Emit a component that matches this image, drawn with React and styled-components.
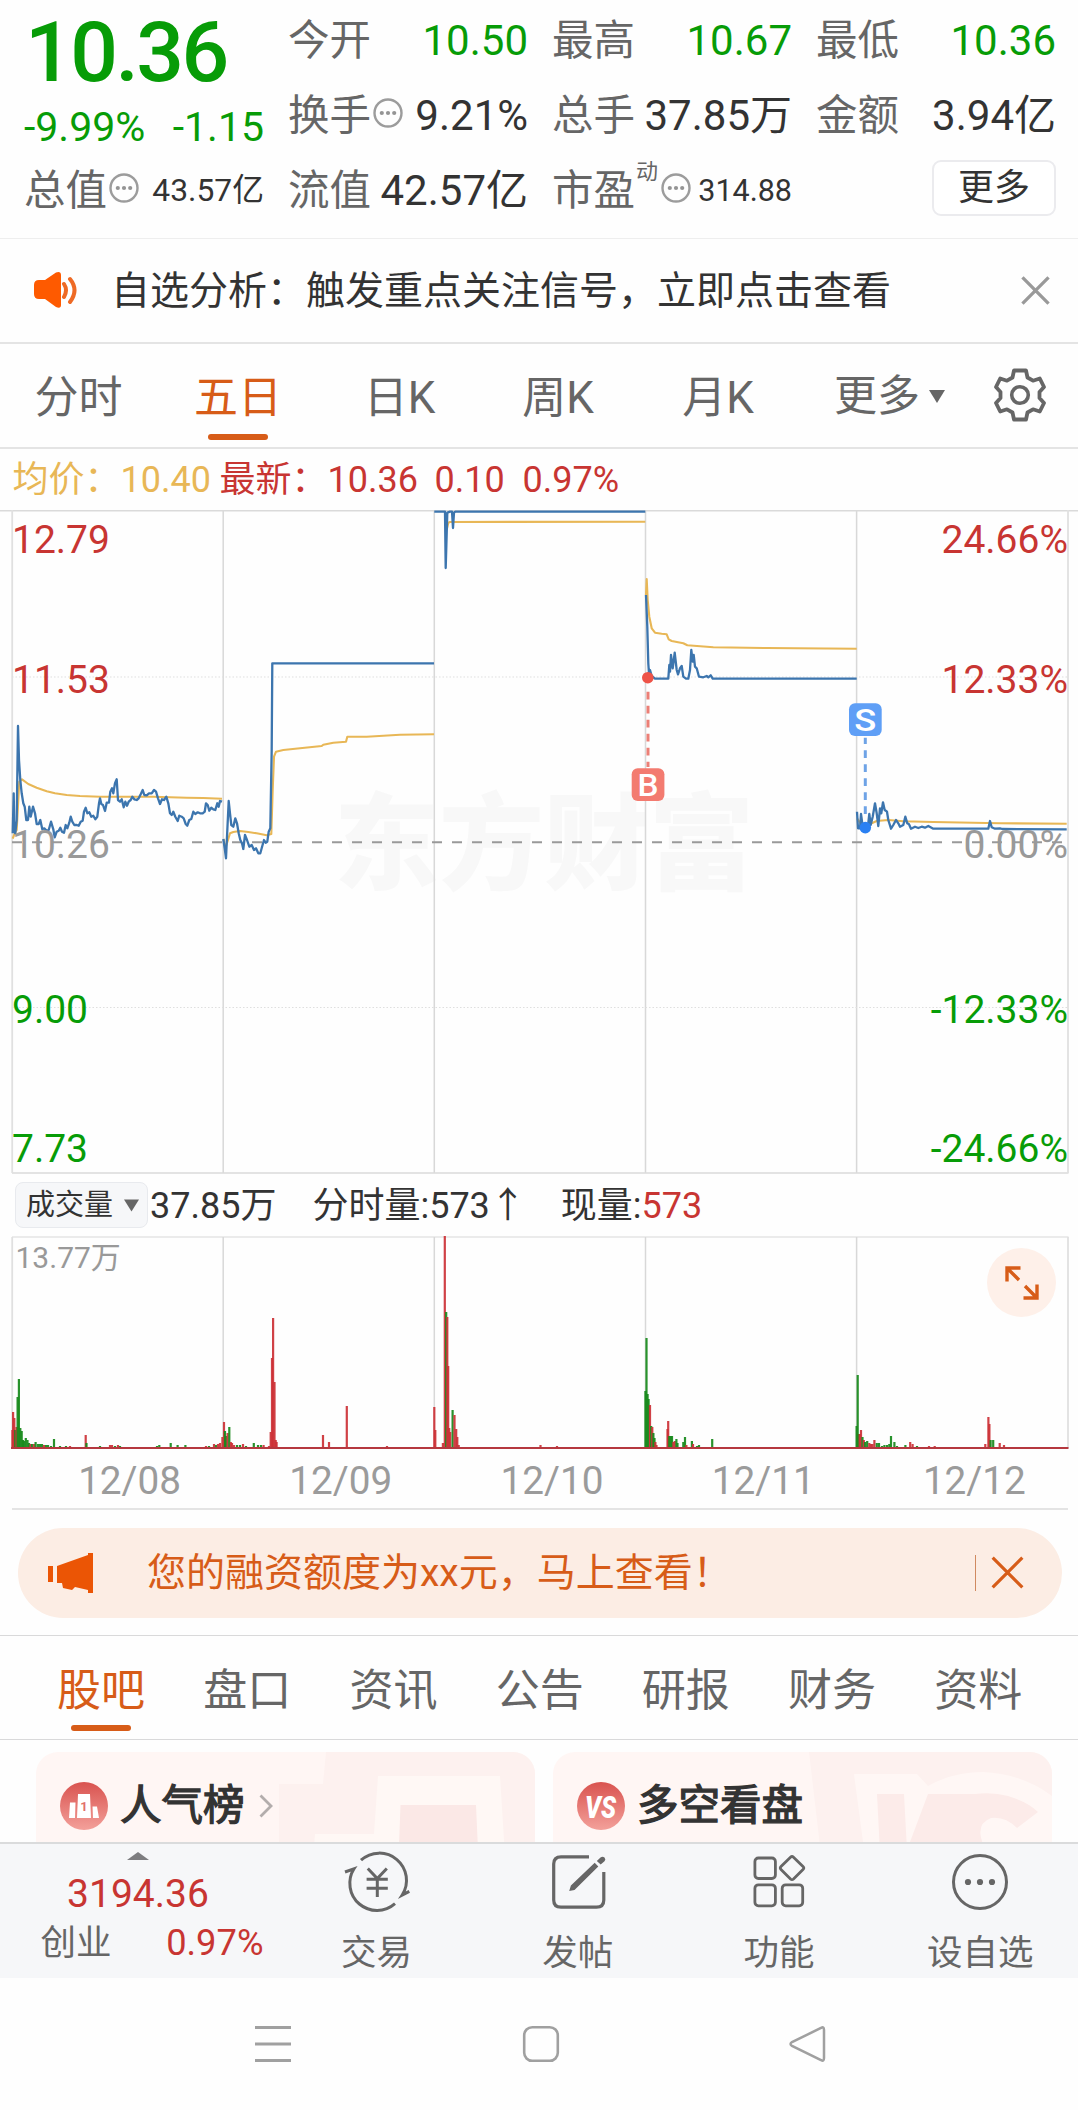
import React from "react";
import styled, { createGlobalStyle } from "styled-components";

const GREEN = "#079c07";
const RED = "#c83532";
const ORANGE = "#d75c18";
const GOLD = "#e8b756";
const BLUE = "#3c75ae";
const GREY = "#666";
const INK = "#333";
const LINE = "#e4e4e4";

const Global = createGlobalStyle`
  * { box-sizing: border-box; }
  body {
    margin: 0;
    background: #fdfdfd;
    color: ${INK};
    font-family: Roboto, "Noto Sans CJK SC", sans-serif;
  }
  svg { display: block; flex: none; }
`;

const Page = styled.main`
  width: 1078px;
  height: 2110px;
  display: flex;
  flex-direction: column;
  background: #fefefe;
  overflow: hidden;
`;

/* ---------- quote header ---------- */
const Quote = styled.section`
  height: 239px;
  padding: 3px 22px 0 25px;
  display: grid;
  grid-template-columns: repeat(4, 239px);
  column-gap: 25px;
  border-bottom: 1px solid #eeeeee;
`;
const Column = styled.div`
  display: flex;
  flex-direction: column;
`;
const Cell = styled.div`
  height: 75px;
  display: flex;
  align-items: center;
  justify-content: space-between;
  line-height: 75px;
  white-space: nowrap;
`;
const BigPrice = styled.div`
  height: 91px;
  line-height: 100px;
  font-size: 84px;
  font-weight: 500;
  letter-spacing: -2.5px;
  color: ${GREEN};
`;
const ChangeRow = styled.div`
  height: 59px;
  display: flex;
  justify-content: space-between;
  line-height: 67px;
  font-size: 41px;
  color: ${GREEN};
  margin-left: -1px;
`;
const Label = styled.span`
  font-size: 41.5px;
  color: ${GREY};
  display: flex;
  align-items: center;
  gap: 3px;
  margin-left: -1px;
`;
const Sup = styled.sup`
  font-size: 22px;
  line-height: 22px;
  align-self: flex-start;
  margin: 8px 1px 0 -2px;
`;
const InfoSlot = styled.span`
  margin: -6px 0 0 -1px;
`;
const Value = styled.span`
  font-size: ${(p) => p.$size || 42}px;
  color: ${(p) => (p.$green ? GREEN : INK)};
`;
const MoreButton = styled.button`
  width: 124px;
  height: 56px;
  margin: 7px 0 0 auto;
  padding: 0;
  border: 2px solid #ebebee;
  border-radius: 9px;
  background: #fff;
  color: ${INK};
  font: 36px/51px Roboto, "Noto Sans CJK SC", sans-serif;
`;

/* ---------- notice ---------- */
const Notice = styled.section`
  height: 105px;
  display: flex;
  align-items: center;
  padding: 0 28px 1px 33px;
  border-bottom: 2px solid ${LINE};
  font-size: 39px;
  line-height: 103px;
`;
const NoticeText = styled.span`
  flex: 1;
  margin: 2px 0 0 32px;
  white-space: nowrap;
`;

/* ---------- tabs ---------- */
const Tabs = styled.nav`
  height: 105px;
  display: flex;
  border-bottom: 2px solid ${LINE};
`;
const Tab = styled.div`
  width: ${(p) => p.$w}px;
  height: 100%;
  display: flex;
  flex: none;
  flex-direction: column;
  align-items: center;
  font-size: 44px;
  line-height: ${(p) => p.$lh}px;
  color: ${(p) => (p.$active ? ORANGE : GREY)};
  white-space: nowrap;
`;
const Underline = styled.i`
  width: 60px;
  height: 6px;
  border-radius: 3px;
  background: ${ORANGE};
  margin-top: ${(p) => p.$top}px;
`;
const MoreTab = styled.div`
  display: flex;
  align-items: center;
  gap: 9px;
  width: 161px;
  padding: 1px 0 0 34px;
  font-size: 43px;
  line-height: 107px;
  color: ${GREY};
`;
const GearSlot = styled.div`
  display: flex;
  flex: 1;
  justify-content: center;
  padding: 24px 0 0 0;
`;

/* ---------- chart ---------- */
const Legend = styled.div`
  height: 61px;
  padding: 0 0 0 12.5px;
  display: flex;
  font-size: 36px;
  line-height: 62px;
  color: ${RED};
  white-space: pre;
`;
const LegendItem = styled.span`
  color: ${(p) => p.$color || RED};
  width: ${(p) => p.$w}px;
`;
const VolumeBar = styled.div`
  height: 62px;
  display: flex;
  align-items: center;
  padding-left: 15px;
  font-size: 36px;
  line-height: 64px;
  white-space: nowrap;
`;
const Picker = styled.div`
  width: 133px;
  height: 46px;
  display: flex;
  align-items: center;
  justify-content: space-between;
  padding: 0 8px 0 10px;
  border: 1.5px solid #e8eaee;
  border-radius: 8px;
  background: #f6f7f9;
  font-size: 29px;
  line-height: 44px;
`;
const Metric = styled.span`
  margin: 2px 0 0 ${(p) => p.$gap}px;
`;
const RedText = styled.span`
  color: ${RED};
`;
const VolumePanel = styled.div`
  position: relative;
`;
const ExpandButton = styled.div`
  position: absolute;
  left: 987px;
  top: 12px;
  width: 69px;
  height: 69px;
  border-radius: 50%;
  background: #fef0e9;
  display: flex;
  align-items: center;
  justify-content: center;
`;
const Dates = styled.div`
  height: 61px;
  margin: 0 10px 0 12px;
  padding-left: 12px;
  display: flex;
  border-bottom: 2px solid ${LINE};
`;
const DateLabel = styled.span`
  flex: none;
  width: 211.2px;
  text-align: center;
  font-size: 38.7px;
  line-height: 64px;
  color: #9b9b9b;
  &:last-child {
    margin-right: -25px;
  }
`;

/* ---------- promo ---------- */
const Promo = styled.section`
  height: 90px;
  margin: 18px 16px 17px 18px;
  border-radius: 45px;
  background: #fcede4;
  color: ${ORANGE};
  display: flex;
  align-items: center;
  padding: 0 38px 1px 29px;
  font-size: 39px;
  line-height: 88px;
`;
const PromoText = styled.span`
  flex: 1;
  margin-left: 53px;
  white-space: nowrap;
`;
const PromoRule = styled.i`
  width: 1.5px;
  height: 36px;
  background: #d08a60;
  margin-right: 15px;
`;
const SubTabs = styled.nav`
  height: 105px;
  display: flex;
  padding: 0 27px 0 28px;
  border-top: 1px solid #d9d9da;
  border-bottom: 1px solid #d9d9da;
`;

/* ---------- cards ---------- */
const Cards = styled.section`
  height: 102px;
  padding: 12px 26px 0 36px;
  display: grid;
  grid-template-columns: 499px 499px;
  column-gap: 18px;
  overflow: hidden;
`;
const Card = styled.article`
  position: relative;
  height: 120px;
  border-radius: 22px;
  overflow: hidden;
  background: #fff6f4;
`;
const CardArt = styled.svg`
  position: absolute;
  inset: 0;
`;
const CardHead = styled.div`
  position: relative;
  display: flex;
  align-items: center;
  height: 107px;
  padding-left: 24px;
`;
const CardTitle = styled.span`
  margin: 1px 14px 0 12px;
  font-size: 41.5px;
  line-height: 108px;
  -webkit-text-stroke: 1.3px ${INK};
  color: ${INK};
`;

/* ---------- bottom bar ---------- */
const Bottom = styled.footer`
  height: 136px;
  display: flex;
  border-top: 2px solid #dadbdc;
  background: #f6f7f9;
  color: ${GREY};
`;
const IndexBox = styled.div`
  width: 276px;
  flex: none;
  display: flex;
  flex-direction: column;
  align-items: center;
  padding-top: 8px;
`;
const IndexValue = styled.div`
  margin-top: 10px;
  height: 48px;
  font-size: 39px;
  line-height: 49px;
  color: ${RED};
`;
const IndexRow = styled.div`
  width: 223px;
  display: flex;
  justify-content: space-between;
  font-size: 35.5px;
  line-height: 50px;
  margin-left: 28px;
`;
const IndexChange = styled.span`
  color: ${RED};
  font-size: 36.3px;
`;
const Action = styled.div`
  width: 201.2px;
  flex: none;
  display: flex;
  flex-direction: column;
  align-items: center;
  padding-top: 8px;
  font-size: 35.5px;
  line-height: 44px;
  gap: 19px;
  &:last-child {
    margin-right: -4px;
  }
`;
const SystemNav = styled.div`
  flex: 1;
  display: grid;
  grid-template-columns: 273px 264px 267px;
  padding-top: 46px;
  padding-left: 136px;
  justify-items: center;
`;

/* ---------- icons ---------- */
const Info = () => (
  <svg width="30" height="30" viewBox="0 0 30 30">
    <circle cx="15" cy="15" r="13.5" fill="none" stroke="#9c9c9c" strokeWidth="2.4" />
    {[8.8, 15, 21.2].map((x) => (
      <circle key={x} cx={x} cy="15" r="2.1" fill="#949494" />
    ))}
  </svg>
);
const Speaker = () => (
  <svg width="46" height="38" viewBox="0 0 46 38">
    <path d="M6 9H12L23 1.5Q28 0 28 4V34Q28 38 23 36L12 28H6Q1 28 1 23V14Q1 9 6 9Z" fill="#fe5a00" />
    <path d="M31 13Q35 19 31 26M37 8Q46 19 37 31" fill="none" stroke="#ee6a25" strokeWidth="4" strokeLinecap="round" />
  </svg>
);
const Cross = ({ size, color, w }) => (
  <svg width={size} height={size} viewBox="0 0 30 30">
    <path d="M1.5 1.5L28.5 28.5M28.5 1.5L1.5 28.5" stroke={color} strokeWidth={w} />
  </svg>
);
const Down = ({ w, h }) => (
  <svg width={w} height={h} viewBox="0 0 16 13">
    <path d="M0 0H16L8 13Z" fill="#666" />
  </svg>
);
const Gear = () => (
  <svg width="52" height="54" viewBox="0 0 52 54">
    <path
      d="M20 2.5H32L33.5 9.5L39 12.7L45.8 10.5L50 19L45.5 24V30L50 35L45.8 43.5L39 41.3L33.5 44.5L32 51.5H20L18.5 44.5L13 41.3L6.2 43.5L2 35L6.5 30V24L2 19L6.2 10.5L13 12.7L18.5 9.5Z"
      fill="none"
      stroke="#666"
      strokeWidth="3.8"
      strokeLinejoin="round"
    />
    <circle cx="26" cy="27" r="8.3" fill="none" stroke="#666" strokeWidth="3.6" />
  </svg>
);
const Expand = () => (
  <svg width="34" height="34" viewBox="0 0 34 34">
    <path d="M2 15.500V2H15.500M2 2L14 14M32 18.500V32H18.500M32 32L20 20" fill="none" stroke={ORANGE} strokeWidth="3.4" />
  </svg>
);
const Megaphone = () => (
  <svg width="47" height="42" viewBox="0 0 47 42">
    <path d="M1 14H6V30H1ZM10 14L41 3V1H46V41H41V38L28 35L25 38L16 36L15 31H10Z" fill="#eb5505" />
  </svg>
);
const Podium = () => (
  <svg width="48" height="48" viewBox="0 0 48 48">
    <defs>
      <linearGradient id="badge" x1="0" y1="0" x2="0" y2="1">
        <stop offset="0" stopColor="#d9534f" />
        <stop offset="1" stopColor="#f3a09a" />
      </linearGradient>
    </defs>
    <circle cx="24" cy="24" r="24" fill="url(#badge)" />
    <path d="M10 20.500H15.500L15 36H9ZM18 12H30L31 36H17ZM32.500 24.500H37L39 36H33Z" fill="#fff" />
    <text x="24" y="29" textAnchor="middle" fontSize="13" fontWeight="700" fill="#e2706b">1</text>
  </svg>
);
const Versus = () => (
  <svg width="48" height="48" viewBox="0 0 48 48">
    <circle cx="24" cy="24" r="24" fill="url(#badge)" />
    <text x="23.500" y="35.500" textAnchor="middle" fontSize="32" fontWeight="900" fontStyle="italic" fill="#fff" textLength="31" lengthAdjust="spacingAndGlyphs">VS</text>
  </svg>
);
const Chevron = () => (
  <svg width="14" height="24" viewBox="0 0 14 24">
    <path d="M1.500 1.500L12 12L1.500 22.500" fill="none" stroke="#b3adac" strokeWidth="2.8" />
  </svg>
);
const Trade = () => (
  <svg width="66" height="60" viewBox="0 0 66 60" overflow="visible">
    <g fill="none" stroke="#666" strokeWidth="3">
      <path d="M17 8.200A27.200 27.200 0 0 1 58.200 43L65.300 39.300" />
      <path d="M51 51.700A27.200 27.200 0 0 1 10 16.800L1 20" />
      <path d="M23.800 16.500L33.300 26.500L42.800 16.500M33.300 26V45M22.600 27.200H43.800M22.600 36.300H43.800" />
    </g>
  </svg>
);
const Compose = () => (
  <svg width="58" height="60" viewBox="0 0 58 60">
    <path d="M40 4.800H12Q4.700 4.800 4.700 12V48Q4.700 55.200 12 55.200H47.500Q54.800 55.200 54.800 48V20" fill="none" stroke="#666" strokeWidth="3.200" />
    <path d="M20.200 39L21.900 33.500L45.700 10.700L49.300 14.500L25.500 38ZM47.800 8.900L51.500 5.500Q53.500 3.800 55.500 5.500Q57.200 7.500 55.500 9.300L51.700 12.600Z" fill="#666" />
  </svg>
);
const Blocks = () => (
  <svg width="56" height="60" viewBox="0 0 56 60">
    <g fill="none" stroke="#666" strokeWidth="2.800">
      <rect x="3.900" y="6" width="20.500" height="20.500" rx="3.500" />
      <rect x="3.900" y="32.800" width="20.500" height="21" rx="3.500" />
      <rect x="31.200" y="32.800" width="20.500" height="21" rx="3.500" />
      <path d="M39.500 5.200Q41 3.800 42.500 5.200L52 14.500Q53.500 16 52 17.500L42.500 27Q41 28.300 39.500 27L30 17.500Q28.500 16 30 14.500Z" />
    </g>
  </svg>
);
const More = () => (
  <svg width="58" height="60" viewBox="0 0 58 60">
    <circle cx="29" cy="30" r="26.500" fill="none" stroke="#666" strokeWidth="3" />
    {[17, 29, 41].map((x) => (
      <circle key={x} cx={x} cy="30" r="3.100" fill="#666" />
    ))}
  </svg>
);

/* ---------- price data: samples in thirds of a pixel, per origin ---------- */
const toPoints = (data, ox, oy) =>
  data
    .split(" ")
    .map((pair) => {
      const [x, y] = pair.split(",").map(Number);
      return `${(ox + x / 3).toFixed(1)},${(oy + y / 3).toFixed(1)}`;
    })
    .join(" ");

const PRICE = [
  [0, 130, "38,580 41,460 43,575 46,580 50,540 54,258 57,360 61,420 65,460 70,490 74,500 79,540 84,540 88,500 92,530 99,500 105,520 110,552 116,552 121,540 127,568 133,565 140,572 146,570 153,545 160,568 164,592 170,575 176,572 181,563 186,575 192,578 197,555 202,565 208,548 212,530 217,545 223,555 230,555 236,557 242,545 248,542 252,515 257,503 262,520 268,517 274,530 280,527 286,538 292,530 297,490 300,475 304,492 309,495 315,513 320,488 327,488 331,455 336,445 340,460 345,430 350,418 354,480 360,485 365,478 371,502 376,485 381,497 386,485 392,480 397,470 403,478 410,480 416,475 422,463 428,450 433,465 440,466 447,460 455,460 462,450 468,455 474,475 480,492 486,478 492,480 499,470 505,490 510,520 515,525 520,515 526,530 533,543 538,527 545,530 551,535 557,552 562,557 568,540 574,537 580,515 586,522 593,517 600,520 608,520 614,515 618,490 623,495 628,512 634,503 640,508 646,510 652,490 656,500 660,483 666,485"],
  [0, 130, "670,597 674,625 678,655 681,590 686,483 690,520 694,555 700,560 706,535 711,550 716,580 721,600 726,610 730,627 735,585 741,600 748,620 755,615 762,630 768,625 775,640 781,640 787,618 792,600 797,608 802,605 806,575 811,565 815,330 817,70 1302,70"],
  [0, 0, "1303,5 1335,5 1337,174 1342,8 1350,5 1356,5 1359,54 1362,8 1366,5 1936,5"],
  [600, 50, "138,105 142,200 145,310 147,340 150,330 155,348 165,356 205,356 208,315 210,335 213,285 218,325 224,278 230,330 234,343 240,325 245,318 250,350 258,356 265,356 270,330 274,270 278,305 281,285 285,320 290,325 297,350 310,352 320,348 325,352 332,346 338,356 770,356"],
  [600, 50, "771,755 774,805 780,805 783,762 788,800 793,800 798,805 803,805 808,762 812,795 818,770 825,730 830,760 835,798 840,745 844,760 849,727 854,750 861,755 865,780 873,806 880,795 888,780 895,790 900,800 910,795 916,770 922,790 927,793 933,806 945,800 955,804 965,800 975,803 985,798 1000,806 1165,806 1170,783 1175,802 1185,806 1200,805 1207,807 1400,808"],
];
const AVERAGE = [
  [0, 130, "38,596 44,580 50,570 55,480 58,425 66,418 85,432 110,443 140,454 165,460 200,465 240,468 300,470 460,470 560,473 610,474 666,476"],
  [0, 130, "671,597 676,625 684,600 690,580 700,576 720,573 745,576 770,580 800,586 814,582 818,450 822,350 828,335 850,330 900,325 965,318 970,314 1000,308 1038,305 1042,290 1100,290 1200,284 1302,283"],
  [0, 0, "1340,60 1345,38 1350,36 1936,35"],
  [600, 50, "138,105 140,57 143,120 148,170 155,205 165,218 185,221 200,223 206,238 215,243 250,250 262,256 340,262 500,264 770,266"],
  [600, 50, "771,775 785,795 815,790 830,783 865,780 910,784 1000,786 1200,790 1400,791"],
];
const DAYS = [223.2, 434.3, 645.5, 856.6];
const AXIS = [
  [43, "12.79", "24.66%", RED],
  [182.6, "11.53", "12.33%", RED],
  [348, "10.26", "0.00%", "#999"],
  [512.5, "9.00", "-12.33%", GREEN],
  [652, "7.73", "-24.66%", GREEN],
];

const PriceChart = () => (
  <svg width="1078" height="664" viewBox="0 0 1078 664" fontFamily='Roboto, "Noto Sans CJK SC", sans-serif'>
    <text x="544" y="371" textAnchor="middle" fontSize="105" fontWeight="900" fill="#f8f8f8">东方财富</text>
    <g stroke="#d8d8d8" strokeWidth="1.5">
      {DAYS.map((x) => (
        <path key={x} d={`M${x} 1V663`} />
      ))}
    </g>
    <path d="M0 0.700H1078M12 663H1068.500" stroke="#dadada" strokeWidth="1.600" />
    <path d="M12.200 0V663M1068 0V663" stroke="#e0e0e0" strokeWidth="1.800" />
    <path d="M12 167H1068M12 497.500H1068" stroke="#dfdfdf" strokeDasharray="1.500 2" />
    <path d="M12 332.300H1068" stroke="#999" strokeWidth="2" strokeDasharray="10 10" />
    <g fill="none" stroke={GOLD} strokeWidth="2.100" strokeLinejoin="round">
      {AVERAGE.map(([x, y, d], i) => (
        <polyline key={i} points={toPoints(d, x, y)} />
      ))}
    </g>
    <g fill="none" stroke={BLUE} strokeWidth="2.300" strokeLinejoin="round">
      {PRICE.map(([x, y, d], i) => (
        <polyline key={i} points={toPoints(d, x, y)} />
      ))}
    </g>
    {AXIS.map(([y, left, right, color]) => (
      <g key={left} fontSize="39" fill={color}>
        <text x="12" y={y}>{left}</text>
        <text x="1068" y={y} textAnchor="end">{right}</text>
      </g>
    ))}
    <path d="M648 181.700V257" stroke="#ec7f76" strokeWidth="3" strokeDasharray="7.800 6.200" />
    <circle cx="647.800" cy="167.700" r="5.800" fill="#ee5348" />
    <rect x="631.700" y="258.300" width="32.700" height="32.700" rx="6" fill="#f37b70" />
    <text x="648" y="286" textAnchor="middle" fontSize="31" fontWeight="500" fill="#fff" textLength="21" lengthAdjust="spacingAndGlyphs">B</text>
    <path d="M865.300 227.700V305" stroke="#6ea3e6" strokeWidth="3" strokeDasharray="7.800 6.200" strokeDashoffset="1.500" />
    <circle cx="865.300" cy="317.600" r="5.800" fill="#2a80f2" />
    <rect x="849" y="193.300" width="32.700" height="32.700" rx="6" fill="#5f9ff6" />
    <text x="865.300" y="221" textAnchor="middle" fontSize="32" fontWeight="500" fill="#fff" textLength="22" lengthAdjust="spacingAndGlyphs">S</text>
  </svg>
);

/* ---------- volume data: x, height, r|g ---------- */
const VOLUME = (
  "12.4,18,r 13.1,36,r 14.3,30,r 15.3,18,g 16.5,21,r 17.6,51,g 18.9,69,g 20.3,20,g 21.7,17,g 23,8,g 24.3,7,g 25.8,10,g 27.5,8,g 29,5,g 30.5,4,r 32,4,g 34,4,r 35.600,6,g 38,4,g 40,4,g 42,4,g 44,3,r 46,3,g 48,3,g 51,2,g 54,9,g 60,2,g 66,2,g 70,2,r 85.7,13,r 86.5,5,g 100,2,g 110,3,r 112,3,r 115,2,g 118,3,r 120,2,g 157,2,g 159.3,3,g 170.7,5,g 177.6,3,g 185.4,3,g 206,2,r 209,2,g 214,4,r 216,3,g 218,4,r 220,5,r 222.4,11,r 224,26,r 225,17,g 226.3,12,g 227.6,15,r 229.3,21,g 230.8,6,r 232,5,r 234,3,r 237,3,g 240,3,g 243,4,r 246,2,g 253.8,5,g 258,3,g 261,3,g 263.6,3,r 269,2,r 270.7,16,r 272,90,r 273.1,130,r 274.5,66,r 275.700,8,r 276.6,6,r 323,13,r 329,6,r 346.8,42,r 387,2,r 434.3,41,r 435.3,18,r 442.9,5,r 444.8,212,r 446.2,136,g 447.3,131,r 448.2,82,r 449.2,20,r 450.2,16,r 452.6,38,g 454.5,33,r 456.2,19,r 457.3,11,r 458.7,3,r " +
  "540.5,3,r 557,2,r 645.4,57,g 646.5,110,g 647.6,54,g 648.6,49,g 650,43,r 651.2,22,g 652.3,21,r 653.4,15,g 654.5,10,g 655.4,6,r 656.5,3,r 667.5,19,r 668.2,27,r 669.3,12,g 670.6,12,g 672,12,g 673.4,6,r 674.8,7,r 676.4,9,g 677.5,5,g 683.3,6,g 685,11,g 686.4,3,r 691.9,7,g 693,4,r 697,2,g 699,3,g 712.2,9,g 856.6,22,g 857.7,73,g 858.7,14,g 859.7,14,r 861,18,r 862.5,11,g 863.8,8,r 865.2,6,g 867.2,7,g 869.3,5,r 871,4,r 872.5,4,r 874.4,8,r 876.8,5,g 879,5,g 882,2,g 884.4,3,g 887,3,g 889.3,4,g 891,12,g 894.4,6,g 897,2,g 905.4,3,g 910.2,6,r 912.6,4,r 917,2,g 929,2,r 934.7,2,r 985.3,4,r 988.4,31,r 989.4,24,r 990.6,8,g 993.2,8,g 999.7,5,r 1004,3,r"
)
  .split(" ")
  .map((item) => {
    const [x, h, c] = item.split(",");
    return { x: Number(x), h: Number(h), color: c === "r" ? "#cc3136" : "#16891a" };
  });

const VolumeChart = () => (
  <svg width="1078" height="213" viewBox="0 0 1078 213">
    <path d="M12 1H1068.500" stroke="#e4e4e4" strokeWidth="1.500" />
    <path d="M12.200 1V212M1068 1V212" stroke="#e0e0e0" strokeWidth="1.800" />
    <g stroke="#d8d8d8" strokeWidth="1.5">
      {DAYS.map((x) => (
        <path key={x} d={`M${x} 1V212`} />
      ))}
    </g>
    {VOLUME.map((bar, i) => (
      <rect key={i} x={bar.x - 1.1} y={212 - bar.h} width="2.200" height={bar.h} fill={bar.color} fillOpacity=".92" />
    ))}
    <path d="M11 212H1068.500" stroke="#b5383f" strokeWidth="2" />
    <text x="15.500" y="31.500" fontSize="30" fill="#999">13.77万</text>
  </svg>
);

const STATS = [
  [["今开", "10.50", { green: true }], ["换手", "9.21%", { info: true }], ["流值", "42.57亿", {}]],
  [["最高", "10.67", { green: true }], ["总手", "37.85万", {}], ["市盈", "314.88", { info: true, size: 30.5, sup: "动" }]],
  [["最低", "10.36", { green: true }], ["金额", "3.94亿", {}]],
];

const Stat = ({ label, value, green, info, size, sup }) => (
  <Cell>
    <Label>
      {label}
      {sup && <Sup>{sup}</Sup>}
      {info && (
        <InfoSlot>
          <Info />
        </InfoSlot>
      )}
    </Label>
    <Value $green={green} $size={size}>{value}</Value>
  </Cell>
);

const MAIN_TABS = [
  ["分时", 157],
  ["五日", 162],
  ["日K", 161],
  ["周K", 156],
  ["月K", 164],
];

const ACTIONS = [
  ["交易", Trade],
  ["发帖", Compose],
  ["功能", Blocks],
  ["设自选", More],
];

export default function App() {
  return (
    <Page>
      <Global />
      <Quote>
        <Column>
          <BigPrice>10.36</BigPrice>
          <ChangeRow>
            <span>-9.99%</span>
            <span>-1.15</span>
          </ChangeRow>
          <Stat label="总值" value="43.57亿" info size={31.8} />
        </Column>
        {STATS.map((rows, i) => (
          <Column key={i}>
            {rows.map(([label, value, opts]) => (
              <Stat key={label} label={label} value={value} {...opts} />
            ))}
            {i === 2 && <MoreButton>更多</MoreButton>}
          </Column>
        ))}
      </Quote>

      <Notice>
        <Speaker />
        <NoticeText>自选分析：触发重点关注信号，立即点击查看</NoticeText>
        <Cross size={29} color="#999" w={3.4} />
      </Notice>

      <Tabs>
        {MAIN_TABS.map(([name, width], i) => (
          <Tab key={name} $w={width} $lh={108} $active={i === 1}>
            {name}
            {i === 1 && <Underline $top={-18} />}
          </Tab>
        ))}
        <MoreTab>
          更多
          <Down w={16} h={13} />
        </MoreTab>
        <GearSlot>
          <Gear />
        </GearSlot>
      </Tabs>

      <Legend>
        <LegendItem $color={GOLD} $w={207}>均价：10.40</LegendItem>
        <LegendItem $w={215}>最新：10.36</LegendItem>
        <LegendItem $w={88}>0.10</LegendItem>
        <LegendItem>0.97%</LegendItem>
      </Legend>
      <PriceChart />

      <VolumeBar>
        <Picker>
          成交量
          <Down w={15} h={13} />
        </Picker>
        <Metric $gap={2}>37.85万</Metric>
        <Metric $gap={36}>分时量:573↑</Metric>
        <Metric $gap={35}>
          现量:<RedText>573</RedText>
        </Metric>
      </VolumeBar>
      <VolumePanel>
        <VolumeChart />
        <ExpandButton>
          <Expand />
        </ExpandButton>
      </VolumePanel>
      <Dates>
        {["12/08", "12/09", "12/10", "12/11", "12/12"].map((d) => (
          <DateLabel key={d}>{d}</DateLabel>
        ))}
      </Dates>

      <Promo>
        <Megaphone />
        <PromoText>您的融资额度为xx元，马上查看！</PromoText>
        <PromoRule />
        <Cross size={33} color={ORANGE} w={2.9} />
      </Promo>

      <SubTabs>
        {["股吧", "盘口", "资讯", "公告", "研报", "财务", "资料"].map((name, i) => (
          <Tab key={name} $w={146.2} $lh={110} $active={i === 0}>
            {name}
            {i === 0 && <Underline $top={-21} />}
          </Tab>
        ))}
      </SubTabs>

      <Cards>
        <Card>
          <CardArt width="499" height="120" viewBox="0 0 499 120">
            <path d="M290 0H499V120H243V32H287Z" fill="#fdf1ef" />
            <path d="M342 24H464L470 120H276L279 82H338Z" fill="#fff8f5" />
            <path d="M364.500 53H440L443 120H362Z" fill="#fbe8e6" />
          </CardArt>
          <CardHead>
            <Podium />
            <CardTitle>人气榜</CardTitle>
            <Chevron />
          </CardHead>
        </Card>
        <Card>
          <CardArt width="499" height="120" viewBox="0 0 499 120">
            <path d="M256 0H499V120H270Z" fill="#fdf1ef" />
            <path d="M301 22H364L375 34Q400 20 430 20Q470 22 499 44V120H314Z" fill="#fff7f5" />
            <path d="M324 42H351L354 98L375 42H422Q440 40 455 44Q475 50 485 60L464 76Q452 64 438 66Q422 72 430 92L440 120H328Z" fill="#fcebe9" />
          </CardArt>
          <CardHead>
            <Versus />
            <CardTitle>多空看盘</CardTitle>
          </CardHead>
        </Card>
      </Cards>

      <Bottom>
        <IndexBox>
          <svg width="22" height="8" viewBox="0 0 22 8">
            <path d="M0 8L11 0L22 8Z" fill="#7d7d80" />
          </svg>
          <IndexValue>3194.36</IndexValue>
          <IndexRow>
            <span>创业</span>
            <IndexChange>0.97%</IndexChange>
          </IndexRow>
        </IndexBox>
        {ACTIONS.map(([name, Icon]) => (
          <Action key={name}>
            <Icon />
            <span>{name}</span>
          </Action>
        ))}
      </Bottom>

      <SystemNav>
        <svg width="38" height="40" viewBox="0 0 38 40">
          <path d="M1 3.500H37M1 20H37M1 36.500H37" stroke="#a0a0a0" strokeWidth="3" />
        </svg>
        <svg width="38" height="40" viewBox="0 0 38 40">
          <rect x="2.200" y="3.200" width="33.600" height="33.600" rx="8" fill="none" stroke="#a0a0a0" strokeWidth="2.600" />
        </svg>
        <svg width="38" height="40" viewBox="0 0 38 40">
          <path d="M33 4Q36 2 36 6V34Q36 38 33 36L4 22Q1 20 4 18Z" fill="none" stroke="#a0a0a0" strokeWidth="2.500" />
        </svg>
      </SystemNav>
    </Page>
  );
}
